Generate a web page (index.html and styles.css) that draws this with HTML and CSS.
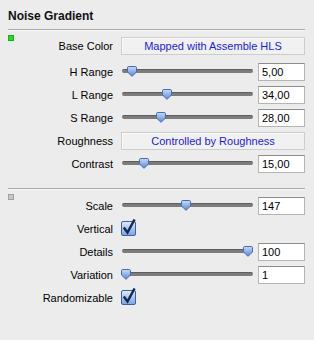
FILE: index.html
```html
<!DOCTYPE html>
<html>
<head>
<meta charset="utf-8">
<link rel="stylesheet" href="styles.css">
</head>
<body>
<div class="panel">
  <div class="title">Noise Gradient</div>
  <div class="sep"></div>
  <div class="section first">
    <div class="row">
      <div class="label"><span class="marker green"></span><span>Base Color</span></div>
      <div class="button">Mapped with Assemble HLS</div>
    </div>
    <div class="row gap">
      <div class="label"><span>H Range</span></div>
      <div class="slider"><div class="track"></div><svg class="thumb" style="left:6px" width="10" height="11" viewBox="0 0 10 11"><use href="#thumb"/></svg></div>
      <div class="value">5,00</div>
    </div>
    <div class="row">
      <div class="label"><span>L Range</span></div>
      <div class="slider"><div class="track"></div><svg class="thumb" style="left:41px" width="10" height="11" viewBox="0 0 10 11"><use href="#thumb"/></svg></div>
      <div class="value">34,00</div>
    </div>
    <div class="row">
      <div class="label"><span>S Range</span></div>
      <div class="slider"><div class="track"></div><svg class="thumb" style="left:35px" width="10" height="11" viewBox="0 0 10 11"><use href="#thumb"/></svg></div>
      <div class="value">28,00</div>
    </div>
    <div class="row">
      <div class="label"><span>Roughness</span></div>
      <div class="button">Controlled by Roughness</div>
    </div>
    <div class="row">
      <div class="label"><span>Contrast</span></div>
      <div class="slider"><div class="track"></div><svg class="thumb" style="left:18px" width="10" height="11" viewBox="0 0 10 11"><use href="#thumb"/></svg></div>
      <div class="value">15,00</div>
    </div>
  </div>
  <div class="sep"></div>
  <div class="section second">
    <div class="row">
      <div class="label"><span class="marker grey"></span><span>Scale</span></div>
      <div class="slider"><div class="track"></div><svg class="thumb" style="left:60px" width="10" height="11" viewBox="0 0 10 11"><use href="#thumb"/></svg></div>
      <div class="value">147</div>
    </div>
    <div class="row">
      <div class="label"><span>Vertical</span></div>
      <div class="check"><svg width="16" height="17" viewBox="0 0 16 17"><use href="#checkbox"/></svg></div>
    </div>
    <div class="row">
      <div class="label"><span>Details</span></div>
      <div class="slider"><div class="track"></div><svg class="thumb" style="left:122px" width="10" height="11" viewBox="0 0 10 11"><use href="#thumb"/></svg></div>
      <div class="value">100</div>
    </div>
    <div class="row">
      <div class="label"><span>Variation</span></div>
      <div class="slider"><div class="track"></div><svg class="thumb" style="left:0px" width="10" height="11" viewBox="0 0 10 11"><use href="#thumb"/></svg></div>
      <div class="value">1</div>
    </div>
    <div class="row">
      <div class="label"><span>Randomizable</span></div>
      <div class="check"><svg width="16" height="17" viewBox="0 0 16 17"><use href="#checkbox"/></svg></div>
    </div>
  </div>
</div>
<svg class="defs" width="0" height="0">
  <defs>
    <linearGradient id="tg" x1="0" y1="0" x2="0" y2="1">
      <stop offset="0" stop-color="#c9dcf8"/>
      <stop offset="0.5" stop-color="#8fb0ea"/>
      <stop offset="1" stop-color="#5f88d8"/>
    </linearGradient>
    <linearGradient id="cg" x1="0" y1="0" x2="0" y2="1">
      <stop offset="0" stop-color="#e4eefc"/>
      <stop offset="0.5" stop-color="#a9c5ef"/>
      <stop offset="1" stop-color="#7aa4e6"/>
    </linearGradient>
    <symbol id="thumb" viewBox="0 0 10 11">
      <path d="M1.8 0.5 H8.2 A1.3 1.3 0 0 1 9.5 1.8 V6 L5 10.3 L0.5 6 V1.8 A1.3 1.3 0 0 1 1.8 0.5 Z" fill="url(#tg)" stroke="#4b6aa8" stroke-width="1"/>
    </symbol>
    <symbol id="checkbox" viewBox="0 0 16 17">
      <rect x="0.5" y="2.5" width="14" height="14" rx="1.5" fill="url(#cg)" stroke="#41609a"/>
      <path d="M3.5 9.5 L6.5 13.5 L13 1.5" fill="none" stroke="#15284f" stroke-width="2.4" stroke-linecap="square" stroke-linejoin="miter"/>
    </symbol>
  </defs>
</svg>
</body>
</html>
```
FILE: styles.css
```css
html, body {
  margin: 0;
  padding: 0;
  background: #ececec;
}
body {
  font-family: "Liberation Sans", Arial, sans-serif;
  font-size: 11px;
  color: #000;
  width: 314px;
  height: 340px;
  overflow: hidden;
}
.panel {
  padding: 8px 9px 0 8px;
}
.title {
  font-size: 12px;
  font-weight: bold;
  line-height: 16px;
  height: 16px;
  color: #111;
  margin-bottom: 5px;
}
.sep {
  height: 1px;
  background: #a9a9a9;
  border-bottom: 1px solid #fafafa;
}
.section.first {
  padding: 3px 0 13px 0;
}
.section.second {
  padding: 4px 0 0 0;
}
.row {
  display: grid;
  grid-template-columns: 113px 137px 47px;
  height: 23px;
  align-items: center;
}
.row.gap {
  margin-top: 3px;
}
.label {
  display: flex;
  justify-content: flex-end;
  align-items: center;
  padding-right: 8px;
  white-space: nowrap;
  height: 100%;
}
.marker {
  align-self: flex-start;
  margin-right: auto;
  width: 6px;
  height: 6px;
  box-sizing: border-box;
}
.marker.green {
  background: #22dd22;
  border: 1px solid #18b018;
  margin-top: 1px;
}
.marker.grey {
  background: #c8c8c8;
  border: 1px solid #a0a0a0;
}
.button {
  grid-column: 2 / 4;
  height: 18px;
  box-sizing: border-box;
  border: 1px solid #cdcdcd;
  box-shadow: inset 1px 1px 0 #fbfbfb;
  background: #f1f1f1;
  color: #1b1bdc;
  text-align: center;
  line-height: 16px;
}
.slider {
  position: relative;
  height: 23px;
  margin-right: 4px;
}
.track {
  position: absolute;
  left: 1px;
  right: 1px;
  top: 9px;
  height: 4px;
  border-radius: 2px;
  background: #7c7c7c;
  border-top: 1px solid #5e5e5e;
  box-sizing: border-box;
}
.thumb {
  position: absolute;
  top: 6px;
  display: block;
}
.value {
  height: 18px;
  box-sizing: border-box;
  background: #fff;
  border: 1px solid #b4b4b4;
  border-top-color: #8c8c8c;
  padding-left: 3px;
  line-height: 16px;
}
.check {
  height: 23px;
  display: flex;
  align-items: center;
}
.check svg {
  display: block;
  margin-top: -2px;
}
.defs {
  position: absolute;
  width: 0;
  height: 0;
}
```
